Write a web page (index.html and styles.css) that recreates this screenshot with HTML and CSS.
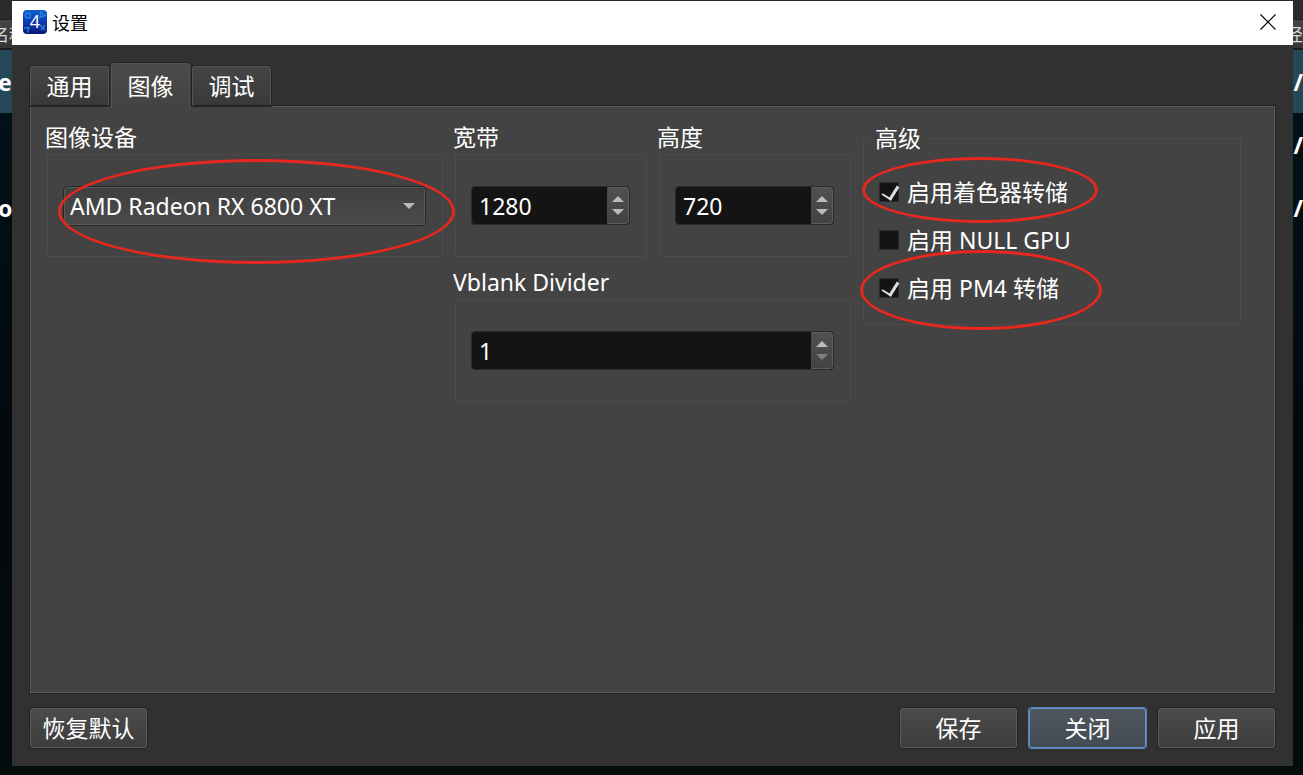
FILE: index.html
```html
<!DOCTYPE html>
<html lang="zh-CN">
<head>
    <meta charset="UTF-8">
    <title>设置</title>
    <link rel="stylesheet" href="styles.css">
</head>
<body>
<!-- 后面的主窗口 -->
<div class="back">
    <div class="back-head"><span>名称</span><span>径</span></div>
    <ul class="back-list">
        <li class="on"><span>e</span><span>/</span></li>
        <li><span></span><span>/</span></li>
        <li><span>o</span><span>/</span></li>
    </ul>
</div>

<div class="dialog">
    <div class="title">
        <svg class="logo" viewBox="0 0 24 24">
            <defs>
                <linearGradient id="logoBg" x1="0" y1="0" x2="0" y2="1">
                    <stop offset="0" stop-color="#0b5fd0"/>
                    <stop offset="0.5" stop-color="#1238b4"/>
                    <stop offset="1" stop-color="#0a1a70"/>
                </linearGradient>
            </defs>
            <rect width="24" height="24" rx="4" fill="url(#logoBg)"/>
            <g fill="none" stroke="#2383dc" stroke-width="1.4">
                <circle cx="5" cy="5.5" r="2.6"/>
                <path d="M18 2l4 3.5-5 2z"/>
                <path d="M17 15l5 5M22 15l-4 5"/>
                <path d="M1 18l5-.5-1.500 5"/>
            </g>
            <text x="12" y="18" class="logo-num">4</text>
        </svg>
        <h1>设置</h1>
        <button type="button" class="close" aria-label="关闭">
            <svg viewBox="0 0 16 16"><path d="M.5.5l15 15M15.500.5l-15 15"/></svg>
        </button>
    </div>

    <div class="main">
        <div class="tabs" role="tablist">
            <button type="button" role="tab">通用</button>
            <button type="button" role="tab" class="on" aria-selected="true">图像</button>
            <button type="button" role="tab">调试</button>
        </div>

        <div class="panel">
            <div class="group">
                <label for="device">图像设备</label>
                <div class="frame">
                    <div class="combo">
                        <select id="device">
                            <option>AMD Radeon RX 6800 XT</option>
                        </select>
                    </div>
                </div>
                <i class="mark mark-device"></i>
            </div>

            <div class="group">
                <label for="width">宽带</label>
                <div class="frame">
                    <div class="spin">
                        <input type="number" id="width" value="1280">
                        <div class="arrows">
                            <button type="button" class="up" aria-label="增加"></button>
                            <button type="button" class="down" aria-label="减少"></button>
                        </div>
                    </div>
                </div>
            </div>

            <div class="group">
                <label for="height">高度</label>
                <div class="frame">
                    <div class="spin">
                        <input type="number" id="height" value="720">
                        <div class="arrows">
                            <button type="button" class="up" aria-label="增加"></button>
                            <button type="button" class="down" aria-label="减少"></button>
                        </div>
                    </div>
                </div>
            </div>

            <fieldset class="advanced">
                <legend>高级</legend>
                <label class="check"><input type="checkbox" checked><span>启用着色器转储</span><i class="mark mark-shader"></i></label>
                <label class="check"><input type="checkbox"><span>启用 NULL GPU</span></label>
                <label class="check"><input type="checkbox" checked><span>启用 PM4 转储</span><i class="mark mark-pm4"></i></label>
            </fieldset>

            <div class="group vblank">
                <label for="vblank">Vblank Divider</label>
                <div class="frame">
                    <div class="spin">
                        <input type="number" id="vblank" value="1" min="1">
                        <div class="arrows">
                            <button type="button" class="up" aria-label="增加"></button>
                            <button type="button" class="down" aria-label="减少" disabled></button>
                        </div>
                    </div>
                </div>
            </div>
        </div>

        <div class="footer">
            <button type="button" class="btn reset">恢复默认</button>
            <button type="button" class="btn">保存</button>
            <button type="button" class="btn focus">关闭</button>
            <button type="button" class="btn">应用</button>
        </div>
    </div>
</div>
</body>
</html>
```
FILE: styles.css
```css
* {
    margin: 0;
    padding: 0;
    box-sizing: border-box;
}

body, button, input, select {
    font-family: "Noto Sans", "Noto Sans CJK SC", sans-serif;
    font-size: 23px;
    color: #fff;
}

body {
    position: relative;
    display: flex;
    height: 100vh;
    overflow: hidden;
    background: #020c10;
}

button, input, select {
    border: 0;
    outline: none;
    background: none;
}

/* 主窗口 */
.back {
    position: absolute;
    top: 0;
    left: -8px;
    right: 0;
    bottom: 0;
    background: linear-gradient(#02141a, #02090f 60%, #030d0e);
}

.back-head {
    display: flex;
    align-items: center;
    justify-content: space-between;
    height: 50px;
    padding-top: 18px;
    border-bottom: 2px solid #1c1c1c;
    background: linear-gradient(#2b2b2b 19px, #1e1e1e 19px, #1e1e1e 20px, #454545 20px, #353535);
    font-size: 17px;
    color: #ddd;
}

.back-list {
    list-style: none;
    font-weight: bold;
}

.back-list li {
    display: flex;
    align-items: center;
    justify-content: space-between;
    height: 63px;
    padding-left: 6px;
}

.back-list .on {
    background: #254858;
}

/* 设置窗口 */
.dialog {
    position: relative;
    display: flex;
    flex: 1;
    flex-direction: column;
    margin: 1px 10px 9px 12px;
    background: #313131;
}

.title {
    display: flex;
    align-items: center;
    height: 44px;
    padding: 0 17px 2px 11px;
    background: #fff;
}

.title h1 {
    flex: 1;
    font-size: 18px;
    font-weight: normal;
    color: #000;
}

.logo {
    width: 24px;
    height: 24px;
    margin-right: 5px;
}

.logo-num {
    font-family: "Open Sans", sans-serif;
    font-size: 18px;
    fill: #fff;
    text-anchor: middle;
}

.close {
    width: 16px;
    height: 16px;
}

.close svg {
    display: block;
    fill: none;
    stroke: #000;
    stroke-width: 1.2;
}

.main {
    display: flex;
    flex: 1;
    flex-direction: column;
    padding: 18px;
}

.tabs {
    position: relative;
    display: flex;
    align-items: flex-end;
    gap: 2px;
    height: 43px;
}

.tabs button {
    width: 79px;
    height: 40px;
    border: 1px solid #545454;
    border-bottom: 1px solid #222;
    border-radius: 3px 3px 0 0;
    box-shadow: 0 0 0 1px #242424;
    background: linear-gradient(#454545, #393939);
    line-height: 36px;
}

.tabs .on {
    height: 44px;
    margin-bottom: -1px;
    border-bottom: 0;
    box-shadow: 0 -1px 0 #242424;
    background: linear-gradient(#4b4b4b, #434343);
}

.panel {
    display: grid;
    flex: 1;
    grid-template-columns: 396fr 192fr 192fr 378fr;
    align-content: start;
    gap: 10px 12px;
    padding: 15px 33px 15px 16px;
    border: 1px solid #5a5a5a;
    box-shadow: 0 0 0 1px #242424;
    background: #434343;
}

.group {
    position: relative;
    min-width: 0;
}

.group label {
    display: block;
    height: 32px;
    margin-left: -2px;
    line-height: 30px;
}

.frame {
    display: flex;
    align-items: center;
    height: 103px;
    padding: 0 16px 0 15px;
    border: 1px solid #4b4b4b;
    border-radius: 2px;
}

.vblank {
    grid-column: 2 / 4;
    grid-row: 2;
}

.combo {
    position: relative;
    flex: 1;
}

.combo select {
    display: block;
    width: 100%;
    height: 40px;
    padding: 0 6px;
    border: 1px solid #272727;
    border-radius: 4px;
    box-shadow: inset 0 0 0 1px #585858;
    background: linear-gradient(#404040, #4a4a4a);
    appearance: none;
}

.combo:after {
    content: "";
    position: absolute;
    top: 17px;
    right: 11px;
    border: 6px solid transparent;
    border-top-color: #bbb;
    border-bottom: 0;
    pointer-events: none;
}

.spin {
    display: flex;
    flex: 1;
    min-width: 0;
    height: 39px;
    border: 1px solid #2b2b2b;
    border-radius: 4px;
    background: #141414;
    overflow: hidden;
}

.spin input {
    flex: 1;
    min-width: 0;
    padding: 0 7px;
    appearance: textfield;
}

.spin input::-webkit-inner-spin-button {
    display: none;
}

.arrows {
    display: flex;
    flex-direction: column;
    width: 22px;
    padding: 4px 0;
    border: 1px solid #5c5c5c;
    border-left-color: #484848;
    border-radius: 0 3px 3px 0;
    background: linear-gradient(#505050, #424242);
}

.arrows button {
    display: flex;
    flex: 1;
    align-items: center;
    justify-content: center;
}

.arrows button:after {
    content: "";
    border: 6px solid transparent;
}

.arrows .up:after {
    border-top: 0;
    border-bottom-color: #bbb;
}

.arrows .down:after {
    border-bottom: 0;
    border-top-color: #bbb;
}

.arrows .down:disabled:after {
    border-top-color: #7d7d7d;
}

.advanced {
    grid-column: 4;
    grid-row: 1 / 3;
    align-self: start;
    min-width: 0;
    padding: 14px 0 12px;
    border: 1px solid #4b4b4b;
    border-radius: 2px;
}

.advanced legend {
    height: 32px;
    margin-left: 5px;
    padding: 0 6px;
    line-height: 32px;
}

.check {
    position: relative;
    display: flex;
    align-items: center;
    gap: 8px;
    height: 48px;
    padding-left: 15px;
}

.check span {
    padding-bottom: 2px;
}

.check input {
    display: flex;
    width: 20px;
    height: 20px;
    border: 1px solid #2b2b2b;
    background: #141414;
    appearance: none;
}

/* 勾 */
.check input:checked:after {
    content: "";
    width: 8px;
    height: 14px;
    margin: 0 0 0 5px;
    border: solid #ddd;
    border-width: 0 3px 2px 0;
    transform: rotate(32deg);
}

/* 红圈标注 */
.mark {
    position: absolute;
    border: 3px solid #e8281e;
    border-radius: 50%;
    pointer-events: none;
}

.mark-device {
    top: 37px;
    left: 11px;
    right: -12px;
    height: 105px;
}

.mark-shader {
    top: -11px;
    left: -2px;
    width: 236px;
    height: 66px;
}

.mark-pm4 {
    top: -14px;
    left: -4px;
    width: 242px;
    height: 80px;
}

.footer {
    display: flex;
    gap: 12px;
    padding-top: 15px;
}

.btn {
    width: 117px;
    height: 40px;
    border: 1px solid #5a5a5a;
    border-radius: 3px;
    box-shadow: 0 0 0 1px #252525;
    background: linear-gradient(#4b4b4b, #3d3d3d);
    line-height: 34px;
}

.reset {
    margin-right: auto;
}

.focus {
    border-color: #6292c8;
    box-shadow: 0 0 0 1px #5585ba;
    background: linear-gradient(#50565d, #434b54);
}
```
